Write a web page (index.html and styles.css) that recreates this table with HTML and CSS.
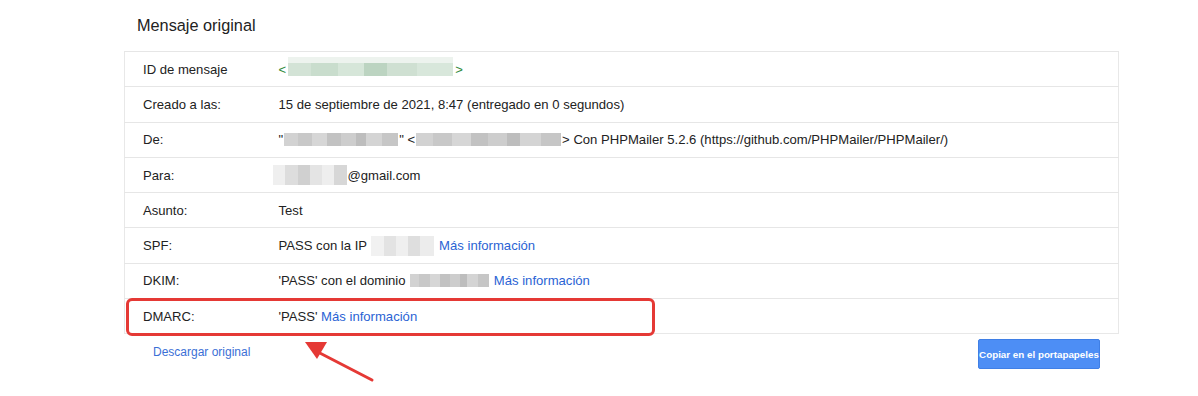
FILE: index.html
```
<!DOCTYPE html>
<html lang="es">
<head>
  <meta charset="UTF-8" />
  <meta name="viewport" content="width=device-width, initial-scale=1.0"/>
  <title>Mensaje original</title>
  <link rel="stylesheet" href="styles.css">
</head>
<body>

  <div class="page">
    <h1>Mensaje original</h1>

    <div class="details">
      <table class="headers">
        <tr>
          <td class="label">ID de mensaje</td>
          <td><span class="msgid">&lt;<span class="blur blur-green" style="width:165px"></span>&gt;</span></td>
        </tr>
        <tr>
          <td class="label">Creado a las:</td>
          <td>15 de septiembre de 2021, 8:47 (entregado en 0 segundos)</td>
        </tr>
        <tr>
          <td class="label">De:</td>
          <td>"<span class="blur" style="width:114px"></span>" &lt;<span class="blur" style="width:145px"></span>&gt; Con PHPMailer 5.2.6 (https://github.com/PHPMailer/PHPMailer/)</td>
        </tr>
        <tr>
          <td class="label">Para:</td>
          <td><span class="blur blur-tall pull-left" style="width:74px"></span>@gmail.com</td>
        </tr>
        <tr>
          <td class="label">Asunto:</td>
          <td>Test</td>
        </tr>
        <tr>
          <td class="label">SPF:</td>
          <td>PASS con la IP <span class="blur blur-light" style="width:63px"></span> <a href="#">Más información</a></td>
        </tr>
        <tr>
          <td class="label">DKIM:</td>
          <td>'PASS' con el dominio <span class="blur" style="width:79px"></span> <a href="#">Más información</a></td>
        </tr>
        <tr>
          <td class="label">DMARC:</td>
          <td>'PASS' <a href="#">Más información</a></td>
        </tr>
      </table>

      <!-- highlight around the DMARC row -->
      <div class="highlight"></div>
      <svg class="pointer" width="100" height="70" viewBox="0 0 100 70">
        <line x1="76" y1="48" x2="18" y2="18" stroke="#e53935" stroke-width="3" stroke-linecap="round"/>
        <polygon points="9,10 31,10 21,27" fill="#e53935"/>
      </svg>
    </div>

    <div class="footer">
      <a href="#" class="download">Descargar original</a>
      <button class="copy-btn">Copiar en el portapapeles</button>
    </div>
  </div>

</body>
</html>
```

FILE: styles.css
```
* {
  box-sizing: border-box;
  margin: 0;
  padding: 0;
}

html, body {
  min-height: 100%;
}

body {
  font-family: Arial, 'Liberation Sans', Helvetica, sans-serif;
  background: #fff;
  color: #222;
  min-height: 100vh;
}

.page {
  width: 995px;
  margin-left: 124px;
}

h1 {
  font-size: 16.3px;
  font-weight: normal;
  color: #222;
  padding: 16px 0 0 13px;
  height: 51px;
}

.details {
  position: relative;
}

.headers {
  width: 100%;
  border-collapse: collapse;
  border: 1px solid #e8e8e8;
  font-size: 13.1px;
}

.headers tr {
  height: 35.3px;
  border-top: 1px solid #e6e6e6;
}

.headers td {
  padding: 0;
  vertical-align: middle;
  white-space: nowrap;
}

.headers td.label {
  width: 154px;
  padding-left: 18px;
}

.headers a {
  color: #2a63d4;
  text-decoration: none;
}

.msgid {
  color: #2f8a3b;
}

/* pixelated redaction blocks */
.blur {
  display: inline-block;
  height: 13px;
  vertical-align: -2px;
  margin: 0 1px;
  background: linear-gradient(90deg,
    #d2d2d2 0 12%, #c8c8c8 12% 25%, #d6d6d6 25% 38%, #c2c2c2 38% 50%,
    #cdcdcd 50% 63%, #bdbdbd 63% 72%, #d4d4d4 72% 86%, #c6c6c6 86% 100%);
}

.blur-green {
  margin: 0 2px;
  background: linear-gradient(90deg,
    #d3e3d6 0 14%, #c9ddcd 14% 30%, #d6e6d9 30% 46%, #bcd4c1 46% 60%,
    #cfe0d2 60% 78%, #d8e7db 78% 100%);
  box-shadow: 0 -6px 0 #edf3ee;
}

.blur-light {
  height: 20px;
  vertical-align: -6px;
  background: linear-gradient(90deg,
    #f1f1f1 0 20%, #e3e3e3 20% 40%, #efefef 40% 58%, #dedede 58% 78%, #ececec 78% 100%);
}

.blur-tall {
  height: 20px;
  vertical-align: -5px;
  background: linear-gradient(90deg,
    #efefef 0 16%, #dddddd 16% 34%, #d0d0d0 34% 50%, #e4e4e4 50% 66%, #eeeeee 66% 82%, #d7d7d7 82% 100%);
}

.pull-left {
  margin-left: -6px;
}

.highlight {
  position: absolute;
  left: 2px;
  top: 247px;
  width: 529px;
  height: 38px;
  border: 3px solid #e53935;
  border-radius: 6px;
  pointer-events: none;
}

.pointer {
  position: absolute;
  left: 172px;
  top: 281px;
  z-index: 2;
  overflow: visible;
}

.footer {
  display: flex;
  justify-content: space-between;
  align-items: flex-start;
  padding: 5px 19px 0 29px;
}

.download {
  font-size: 12px;
  color: #3b6fd6;
  text-decoration: none;
  margin-top: 6px;
}

.copy-btn {
  font-family: Arial, 'Liberation Sans', sans-serif;
  font-size: 9.8px;
  font-weight: bold;
  white-space: nowrap;
  color: #fff;
  background: #4d8ef5;
  border: 1px solid #3f7fe6;
  border-radius: 2px;
  width: 122px;
  height: 30px;
  padding: 0;
}
```
